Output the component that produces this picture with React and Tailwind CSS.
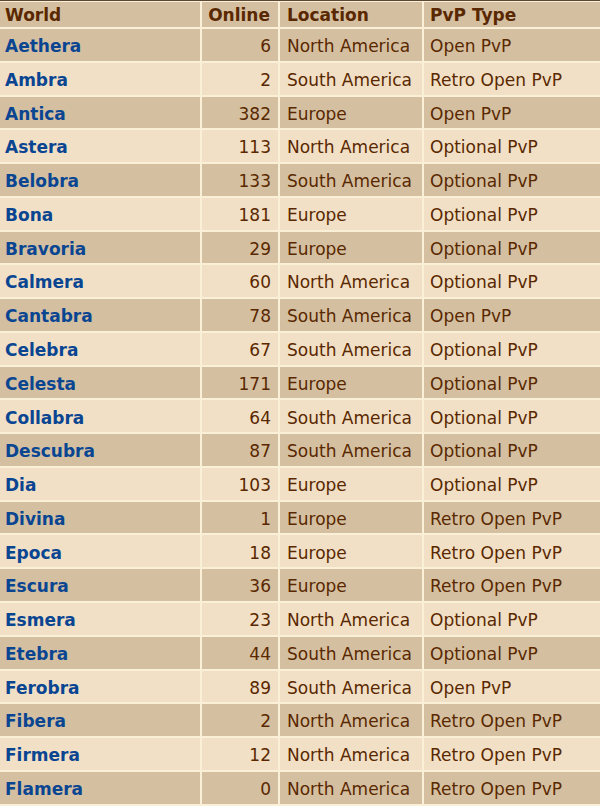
import React from "react";

const rows = [
  ["Aethera", 6, "North America", "Open PvP"],
  ["Ambra", 2, "South America", "Retro Open PvP"],
  ["Antica", 382, "Europe", "Open PvP"],
  ["Astera", 113, "North America", "Optional PvP"],
  ["Belobra", 133, "South America", "Optional PvP"],
  ["Bona", 181, "Europe", "Optional PvP"],
  ["Bravoria", 29, "Europe", "Optional PvP"],
  ["Calmera", 60, "North America", "Optional PvP"],
  ["Cantabra", 78, "South America", "Open PvP"],
  ["Celebra", 67, "South America", "Optional PvP"],
  ["Celesta", 171, "Europe", "Optional PvP"],
  ["Collabra", 64, "South America", "Optional PvP"],
  ["Descubra", 87, "South America", "Optional PvP"],
  ["Dia", 103, "Europe", "Optional PvP"],
  ["Divina", 1, "Europe", "Retro Open PvP"],
  ["Epoca", 18, "Europe", "Retro Open PvP"],
  ["Escura", 36, "Europe", "Retro Open PvP"],
  ["Esmera", 23, "North America", "Optional PvP"],
  ["Etebra", 44, "South America", "Optional PvP"],
  ["Ferobra", 89, "South America", "Open PvP"],
  ["Fibera", 2, "North America", "Retro Open PvP"],
  ["Firmera", 12, "North America", "Retro Open PvP"],
  ["Flamera", 0, "North America", "Retro Open PvP"],
];

export default function App() {
  return (
    <div className="h-[806px] w-[600px] overflow-hidden bg-[#faf0d7] font-['DejaVu_Sans',sans-serif] text-[17px] text-[#5a2800]">
      <div className="border-t border-[#5a4632] pt-[1px]">
        <div className="grid grid-cols-[200px_76px_142px_176px] gap-[2px] auto-rows-[31.77px] grid-rows-[25px]">
          <div className="flex items-center bg-[#d4c0a1] pl-[5px] pt-[2px] font-bold">World</div>
          <div className="flex items-center justify-end bg-[#d4c0a1] pr-[8px] pt-[2px] font-bold">Online</div>
          <div className="flex items-center bg-[#d4c0a1] pl-[7px] pt-[2px] font-bold">Location</div>
          <div className="flex items-center bg-[#d4c0a1] pl-[6px] pt-[2px] font-bold">PvP Type</div>
          {rows.map((r, i) => {
            const bg = i % 2 === 0 ? "bg-[#d4c0a1]" : "bg-[#f1e0c6]";
            return (
              <React.Fragment key={r[0]}>
                <div className={`flex items-center pl-[5px] pt-[4px] font-bold text-[#0a4592] ${bg}`}>{r[0]}</div>
                <div className={`flex items-center justify-end pr-[7px] pt-[4px] ${bg}`}>{r[1]}</div>
                <div className={`flex items-center pl-[7px] pt-[4px] ${bg}`}>{r[2]}</div>
                <div className={`flex items-center pl-[6px] pt-[4px] ${bg}`}>{r[3]}</div>
              </React.Fragment>
            );
          })}
        </div>
      </div>
    </div>
  );
}
